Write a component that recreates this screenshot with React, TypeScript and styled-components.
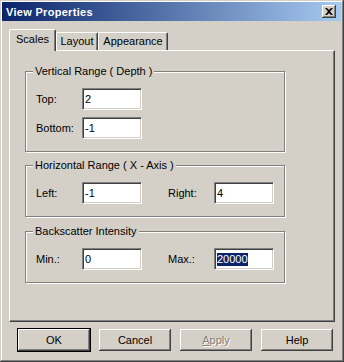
import React from 'react';
import styled, { createGlobalStyle } from 'styled-components';

const GlobalStyle = createGlobalStyle`
  html, body {
    margin: 0;
    padding: 0;
    background: #d4d0c8;
  }
  body {
    font-family: "Liberation Sans", Arial, sans-serif;
    font-size: 11px;
    color: #000;
  }
`;

const Window = styled.div`
  box-sizing: border-box;
  width: 344px;
  height: 362px;
  padding: 2px 3px 3px 2px;
  background: #d4d0c8;
  box-shadow: inset -1px -1px #404040, inset 1px 1px #d4d0c8,
    inset -2px -2px #808080, inset 2px 2px #ffffff;
  display: flex;
  flex-direction: column;
`;

const TitleBar = styled.div`
  height: 19px;
  display: flex;
  align-items: center;
  justify-content: space-between;
  padding-left: 4px;
  background: linear-gradient(to right, #0a246a, #a6caf0);
  color: #fff;
  font-weight: bold;
  font-size: 11px;
  letter-spacing: 0.3px;
`;

const CloseButton = styled.div`
  box-sizing: border-box;
  width: 14px;
  height: 13px;
  margin-right: 5px;
  display: flex;
  align-items: center;
  justify-content: center;
  background: #d4d0c8;
  box-shadow: inset -1px -1px #404040, inset 1px 1px #ffffff,
    inset -2px -2px #808080;
`;

const Body = styled.div`
  flex: 1;
  display: flex;
  flex-direction: column;
  padding: 8px 6px 7px 7px;
`;

const TabStrip = styled.div`
  display: flex;
  align-items: flex-end;
  height: 21px;
`;

const Tab = styled.div<{ $active?: boolean; $w: number }>`
  box-sizing: border-box;
  width: ${(p) => p.$w}px;
  height: ${(p) => (p.$active ? 22 : 18)}px;
  margin-bottom: ${(p) => (p.$active ? -1 : 0)}px;
  padding-bottom: ${(p) => (p.$active ? 3 : 1)}px;
  position: relative;
  z-index: ${(p) => (p.$active ? 1 : 0)};
  display: flex;
  align-items: center;
  justify-content: center;
  background: #d4d0c8;
  border-top: 1px solid #fff;
  border-left: 1px solid #fff;
  border-right: 1px solid #404040;
  border-radius: 2px 2px 0 0;
  box-shadow: inset -1px 0 #808080;
`;

const Panel = styled.div`
  box-sizing: border-box;
  height: 272px;
  padding: 14px 0 0 15px;
  border-top: 1px solid #fff;
  border-left: 1px solid #fff;
  border-right: 1px solid #404040;
  border-bottom: 1px solid #404040;
  box-shadow: inset -1px -1px #808080;
`;

const Group = styled.fieldset<{ $top: number }>`
  box-sizing: border-box;
  width: 260px;
  margin: ${(p) => p.$top}px 0 0 0;
  padding: 10px 0 12px 10px;
  border: 1px solid #808080;
  box-shadow: inset 1px 1px #fff, 1px 1px #fff;
  display: flex;
  flex-direction: column;
  gap: 7px;
`;

const Caption = styled.legend`
  margin-left: -3px;
  padding: 0 2px;
  line-height: 13px;
  background: #d4d0c8;
`;

const Row = styled.div`
  display: flex;
  align-items: center;
  height: 22px;
`;

const Label = styled.span<{ $gap?: number }>`
  width: 46px;
  margin-left: ${(p) => p.$gap ?? 0}px;
`;

const EditBox = styled.div`
  box-sizing: border-box;
  width: 60px;
  height: 22px;
  padding-left: 2px;
  display: flex;
  align-items: center;
  background: #fff;
  border-top: 1px solid #808080;
  border-left: 1px solid #808080;
  border-right: 1px solid #fff;
  border-bottom: 1px solid #fff;
  box-shadow: inset 1px 1px #404040, inset -1px -1px #d4d0c8;
`;

const Selected = styled.span`
  background: #0a246a;
  color: #fff;
  line-height: 13px;
`;

const ButtonRow = styled.div`
  display: flex;
  gap: 7px;
  margin-top: 6px;
  padding-left: 8px;
`;

const Button = styled.div<{ $default?: boolean; $disabled?: boolean }>`
  box-sizing: border-box;
  width: 74px;
  height: 24px;
  display: flex;
  align-items: center;
  justify-content: center;
  background: #d4d0c8;
  border: 1px solid ${(p) => (p.$default ? '#000' : 'transparent')};
  box-shadow: inset -1px -1px #404040, inset 1px 1px #fff,
    inset -2px -2px #808080;
  color: ${(p) => (p.$disabled ? '#808080' : '#000')};
  text-shadow: ${(p) => (p.$disabled ? '1px 1px #fff' : 'none')};
  ${(p) => (p.$default ? '' : 'padding: 1px;')}
`;

const Mnemonic = styled.span`
  text-decoration: underline;
`;

const Field = ({ children }: { children: React.ReactNode }) => <EditBox>{children}</EditBox>;

export default function App() {
  return (
    <>
      <GlobalStyle />
      <Window>
        <TitleBar>
          View Properties
          <CloseButton>
            <svg width="8" height="7" viewBox="0 0 8 7">
              <path d="M0 0h2l2 2 2-2h2L5 3.5 8 7H6L4 5 2 7H0l3-3.5z" fill="#000" />
            </svg>
          </CloseButton>
        </TitleBar>
        <Body>
          <TabStrip>
            <Tab $active $w={47}>Scales</Tab>
            <Tab $w={42}>Layout</Tab>
            <Tab $w={70}>Appearance</Tab>
          </TabStrip>
          <Panel>
            <Group $top={0}>
              <Caption>Vertical Range ( Depth )</Caption>
              <Row>
                <Label>Top:</Label>
                <Field>2</Field>
              </Row>
              <Row>
                <Label>Bottom:</Label>
                <Field>-1</Field>
              </Row>
            </Group>
            <Group $top={7}>
              <Caption>Horizontal Range ( X - Axis )</Caption>
              <Row>
                <Label>Left:</Label>
                <Field>-1</Field>
                <Label $gap={26}>Right:</Label>
                <Field>4</Field>
              </Row>
            </Group>
            <Group $top={8}>
              <Caption>Backscatter Intensity</Caption>
              <Row>
                <Label>Min.:</Label>
                <Field>0</Field>
                <Label $gap={26}>Max.:</Label>
                <Field>
                  <Selected>20000</Selected>
                </Field>
              </Row>
            </Group>
          </Panel>
          <ButtonRow>
            <Button $default>OK</Button>
            <Button>Cancel</Button>
            <Button $disabled>
              <span>
                <Mnemonic>A</Mnemonic>pply
              </span>
            </Button>
            <Button>Help</Button>
          </ButtonRow>
        </Body>
      </Window>
    </>
  );
}
